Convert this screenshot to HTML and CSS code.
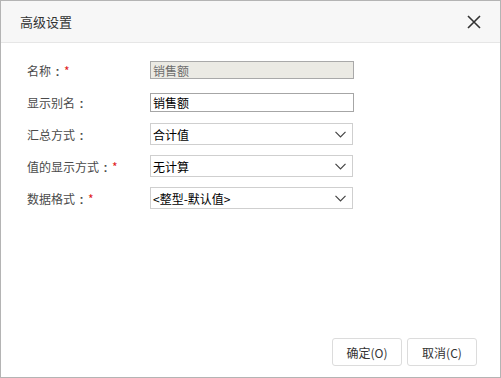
FILE: index.html
```html
<!DOCTYPE html>
<html lang="zh-CN">
<head>
<meta charset="UTF-8">
<title>高级设置</title>
<link rel="stylesheet" href="styles.css">
</head>
<body>
    <div class="dialog">
        <div class="dialog-header">
            <span class="dialog-title">高级设置</span>
            <svg class="close-icon" width="14" height="14" viewBox="0 0 14 14">
                <path d="M1 1L13 13M13 1L1 13" stroke="#333" stroke-width="1.6" fill="none"/>
            </svg>
        </div>
        <div class="dialog-body">
            <div class="form-row">
                <label class="form-label">名称<span class="colon">:</span><span class="required">*</span></label>
                <input class="text-field disabled" type="text" value="销售额" disabled>
            </div>
            <div class="form-row">
                <label class="form-label">显示别名<span class="colon">:</span></label>
                <input class="text-field" type="text" value="销售额">
            </div>
            <div class="form-row">
                <label class="form-label">汇总方式<span class="colon">:</span></label>
                <div class="select-field">
                    <span>合计值</span>
                    <svg width="11" height="7" viewBox="0 0 11 7"><path d="M0.5 0.8L5.5 5.8L10.5 0.8" stroke="#444" stroke-width="1.2" fill="none"/></svg>
                </div>
            </div>
            <div class="form-row">
                <label class="form-label">值的显示方式<span class="colon">:</span><span class="required">*</span></label>
                <div class="select-field">
                    <span>无计算</span>
                    <svg width="11" height="7" viewBox="0 0 11 7"><path d="M0.5 0.8L5.5 5.8L10.5 0.8" stroke="#444" stroke-width="1.2" fill="none"/></svg>
                </div>
            </div>
            <div class="form-row">
                <label class="form-label">数据格式<span class="colon">:</span><span class="required">*</span></label>
                <div class="select-field">
                    <span>&lt;整型-默认值&gt;</span>
                    <svg width="11" height="7" viewBox="0 0 11 7"><path d="M0.5 0.8L5.5 5.8L10.5 0.8" stroke="#444" stroke-width="1.2" fill="none"/></svg>
                </div>
            </div>
        </div>
        <div class="dialog-footer">
            <button class="btn">确定(O)</button>
            <button class="btn">取消(C)</button>
        </div>
    </div>
</body>
</html>
```

FILE: styles.css
```css
body {
    margin: 0;
    font-family: "Noto Sans CJK SC", "Liberation Sans", sans-serif;
    background-color: #ffffff;
}

.dialog {
    width: 501px;
    height: 378px;
    box-sizing: border-box;
    border: 1px solid #b4b4b4;
    display: flex;
    flex-direction: column;
    background-color: #ffffff;
}

.dialog-header {
    height: 41px;
    background-color: #f7f7f7;
    border-bottom: 1px solid #e6e6e6;
    display: flex;
    align-items: center;
    justify-content: space-between;
    padding: 0 19px 0 19px;
}

.dialog-title {
    font-size: 13px;
    color: #333333;
}

.close-icon {
    display: block;
}

.dialog-body {
    padding: 16px 0 0 26px;
}

.form-row {
    display: flex;
    align-items: center;
    height: 22px;
    margin-bottom: 10px;
}

.form-label {
    width: 123px;
    font-size: 12px;
    color: #4a4a4a;
}

/* colon centred in a full-width cell, like the original font */
.colon {
    display: inline-block;
    width: 13px;
    text-align: center;
    font-family: "Liberation Sans", sans-serif;
    font-weight: bold;
}

.required {
    color: #e02020;
}

.text-field {
    width: 204px;
    height: 19px;
    box-sizing: border-box;
    border: 1px solid #a6a6a6;
    padding: 0 2px;
    font-family: "Noto Sans CJK SC", sans-serif;
    font-size: 12px;
    color: #000000;
    background-color: #ffffff;
    outline: none;
}

.text-field.disabled {
    height: 18px;
    background-color: #ebeae4;
    color: #6d6d6d;
    border-color: #a9a9a9;
}

.select-field {
    width: 203px;
    height: 22px;
    box-sizing: border-box;
    border: 1px solid #cfcfcf;
    display: flex;
    align-items: center;
    justify-content: space-between;
    padding: 0 3px 0 2px;
    font-size: 12px;
    color: #000000;
}

.select-field svg {
    margin-right: 3px;
}

.dialog-footer {
    margin-top: auto;
    display: flex;
    justify-content: flex-end;
    gap: 5px;
    padding: 0 23px 11px 0;
}

.btn {
    width: 70px;
    height: 28px;
    border: 1px solid #dcdcdc;
    border-radius: 3px;
    background-color: #ffffff;
    font-family: "Noto Sans CJK SC", sans-serif;
    font-size: 12px;
    color: #333333;
    padding: 0;
}
```
